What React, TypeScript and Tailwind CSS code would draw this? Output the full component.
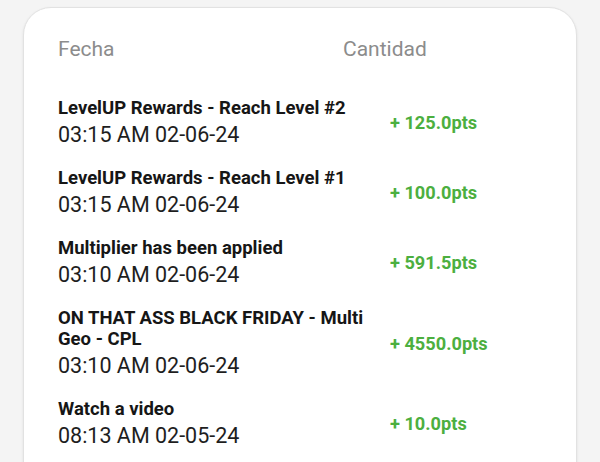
const ROWS = [
  { title: "LevelUP Rewards - Reach Level #2", date: "03:15 AM 02-06-24", pts: "+ 125.0pts" },
  { title: "LevelUP Rewards - Reach Level #1", date: "03:15 AM 02-06-24", pts: "+ 100.0pts" },
  { title: "Multiplier has been applied", date: "03:10 AM 02-06-24", pts: "+ 591.5pts" },
  { title: "ON THAT ASS BLACK FRIDAY - Multi Geo - CPL", date: "03:10 AM 02-06-24", pts: "+ 4550.0pts" },
  { title: "Watch a video", date: "08:13 AM 02-05-24", pts: "+ 10.0pts" },
];

export default function App() {
  return (
    <div className="h-[462px] w-[600px] overflow-hidden bg-[#f4f4f4] px-[23px] pt-[7px] font-['Roboto',sans-serif]">
      <div className="h-[520px] rounded-[28px] border border-[#e2e2e2] bg-white pl-[34px] pt-[27px] shadow-[0_1px_3px_rgba(0,0,0,0.08)]">
        {/* cabecera */}
        <div className="flex text-[21px] leading-[28px] text-[#8c8c8c]">
          <span className="w-[285px]">Fecha</span>
          <span>Cantidad</span>
        </div>

        <div className="mt-[26px]">
          {ROWS.map((r, i) => (
            <div key={i} className="grid grid-cols-[316px_1fr] items-center gap-x-[16px] pt-[9px] pb-[8px]">
              <div>
                <p className="text-[18.5px] font-bold leading-[21px] text-[#161616]">{r.title}</p>
                <p className="text-[21.5px] leading-[32px] text-[#1e1e1e]">{r.date}</p>
              </div>
              <span className="pb-[3px] text-[18.2px] font-bold text-[#4caf3f]">{r.pts}</span>
            </div>
          ))}
        </div>
      </div>
    </div>
  );
}
